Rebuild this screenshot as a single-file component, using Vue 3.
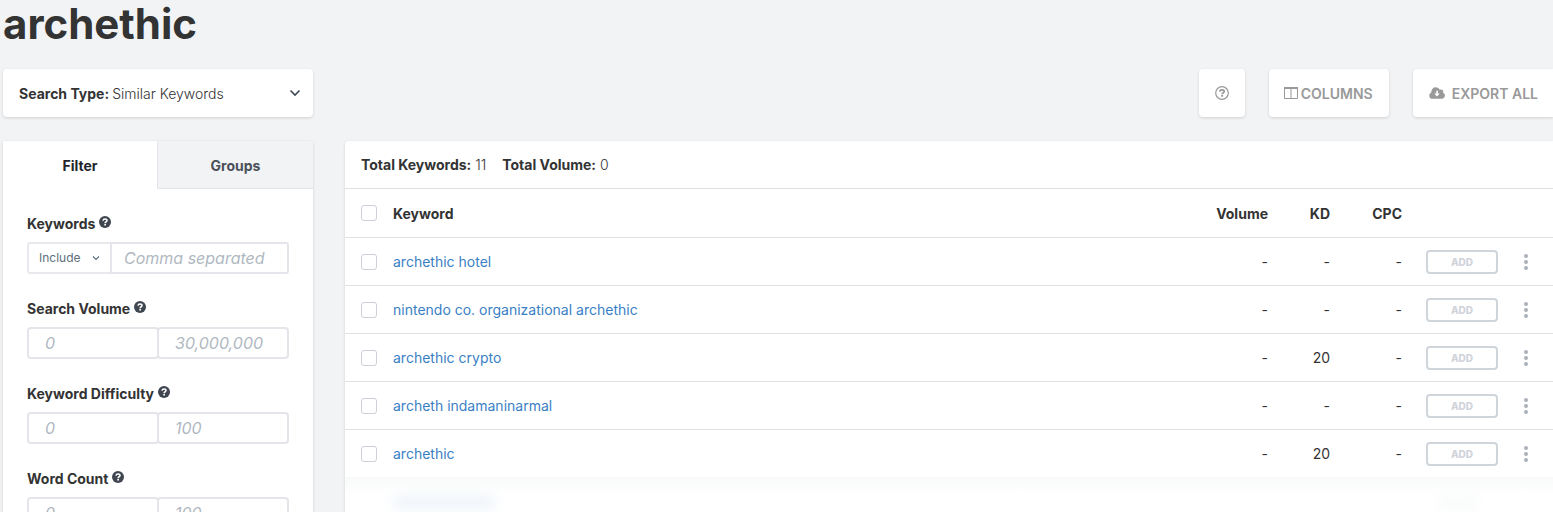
<script setup>
import { ref } from 'vue'

const tab = ref('filter')
const ranges = [
  { id: 'volume', label: 'Search Volume', min: '0', max: '30,000,000' },
  { id: 'difficulty', label: 'Keyword Difficulty', min: '0', max: '100' },
  { id: 'words', label: 'Word Count', min: '0', max: '100' },
]
const rows = [
  { keyword: 'archethic hotel', volume: '-', kd: '-', cpc: '-' },
  { keyword: 'nintendo co. organizational archethic', volume: '-', kd: '-', cpc: '-' },
  { keyword: 'archethic crypto', volume: '-', kd: '20', cpc: '-' },
  { keyword: 'archeth indamaninarmal', volume: '-', kd: '-', cpc: '-' },
  { keyword: 'archethic', volume: '-', kd: '20', cpc: '-' },
]
</script>

<template>
  <div class="page">
    <h1>archethic</h1>

    <div class="toolbar">
      <div class="search-type card">
        <label for="search-type">Search Type:</label>
        <select id="search-type">
          <option>Similar Keywords</option>
        </select>
        <svg class="chevron" viewBox="0 0 12 8" width="12" height="8"><path d="M1.5 1.5 6 6l4.500-4.500" /></svg>
      </div>
      <div class="actions">
        <button class="card action" type="button" aria-label="Help">
          <svg viewBox="0 0 14 14" width="14" height="14">
            <circle cx="7" cy="7" r="6.300" fill="none" stroke="currentColor" stroke-width="1.200" />
            <path d="M4.800 5.600C4.900 4.500 5.800 3.900 7 3.900s2.200.6 2.200 1.600C9.200 6.700 7.200 6.800 7.200 8.200" fill="none" stroke="currentColor" stroke-width="1.700" />
            <path d="M6.200 9h1.900v1.700H6.200z" fill="currentColor" />
          </svg>
        </button>
        <button class="card action columns" type="button">
          <svg viewBox="0 0 14 12" width="14" height="12">
            <path d="M.5 1v10.500h13V1M7 1.500v10" fill="none" stroke="currentColor" />
            <path d="M0 0h14v2H0z" fill="currentColor" />
          </svg>
          <span>COLUMNS</span>
        </button>
        <button class="card action export" type="button">
          <svg viewBox="0 0 16 12" width="16" height="12">
            <path fill="currentColor" fill-rule="evenodd" d="M3.600 11.800A3.400 3.400 0 0 1 .3 8.400c0-1.300.8-2.500 2-3v-.5A4.500 4.500 0 0 1 6.700.3c1.800 0 3.400 1.100 4.100 2.700.4-.3.800-.4 1.300-.4 1.200 0 2.200 1 2.200 2.200 0 .4-.1.700-.3 1 1.100.4 1.900 1.500 1.900 2.800 0 1.800-1.400 3.200-3.100 3.200zM7.300 3.800v2.700H5.200L8 9.600l2.800-3.100H8.900V3.800z" />
          </svg>
          <span>EXPORT ALL</span>
        </button>
      </div>
    </div>

    <div class="content">
      <aside class="sidebar">
        <div class="tabs" role="tablist">
          <button type="button" role="tab" :aria-selected="tab === 'filter'" :class="{ active: tab === 'filter' }" @click="tab = 'filter'">Filter</button>
          <button type="button" role="tab" :aria-selected="tab === 'groups'" :class="{ active: tab === 'groups' }" @click="tab = 'groups'">Groups</button>
        </div>
        <form class="filters" @submit.prevent>
          <div class="field">
            <div class="field-head">
              <label for="keywords">Keywords</label>
              <svg class="hint" viewBox="0 0 12 12" width="12" height="12">
                <circle cx="6" cy="6" r="6" />
                <path d="M4 4.700C4.100 3.700 4.900 3.100 6 3.100s2 .5 2 1.500C8 5.800 6.100 5.700 6.100 7.100" />
                <path class="dot" d="M5.300 7.800h1.700v1.600H5.300z" />
              </svg>
            </div>
            <div class="keyword-inputs">
              <div class="mode">
                <select aria-label="Keyword match mode">
                  <option>Include</option>
                </select>
                <svg class="chevron small" viewBox="0 0 8 6" width="8" height="6"><path d="M1 1.500 4 4.500l3-3" /></svg>
              </div>
              <input id="keywords" class="keywords" type="text" placeholder="Comma separated" />
            </div>
          </div>
          <div v-for="r in ranges" :key="r.id" class="field">
            <div class="field-head">
              <label :for="r.id">{{ r.label }}</label>
              <svg class="hint" viewBox="0 0 12 12" width="12" height="12">
                <circle cx="6" cy="6" r="6" />
                <path d="M4 4.700C4.100 3.700 4.900 3.100 6 3.100s2 .5 2 1.500C8 5.800 6.100 5.700 6.100 7.100" />
                <path class="dot" d="M5.300 7.800h1.700v1.600H5.300z" />
              </svg>
            </div>
            <div class="range">
              <input :id="r.id" type="text" :placeholder="r.min" />
              <input type="text" :aria-label="r.label + ' maximum'" :placeholder="r.max" />
            </div>
          </div>
        </form>
      </aside>

      <main class="results">
        <div class="summary">
          <span><b>Total Keywords:</b> 11</span>
          <span><b>Total Volume:</b> 0</span>
        </div>
        <table>
          <colgroup>
            <col class="c-check" />
            <col />
            <col class="c-volume" />
            <col class="c-kd" />
            <col class="c-cpc" />
            <col class="c-add" />
            <col class="c-menu" />
          </colgroup>
          <thead>
            <tr>
              <th class="check"><input type="checkbox" aria-label="Select all keywords" /></th>
              <th class="keyword">Keyword</th>
              <th>Volume</th>
              <th>KD</th>
              <th>CPC</th>
              <th></th>
              <th></th>
            </tr>
          </thead>
          <tbody>
            <tr v-for="row in rows" :key="row.keyword">
              <td class="check"><input type="checkbox" :aria-label="'Select ' + row.keyword" /></td>
              <td class="keyword"><a href="#">{{ row.keyword }}</a></td>
              <td>{{ row.volume }}</td>
              <td>{{ row.kd }}</td>
              <td>{{ row.cpc }}</td>
              <td class="add"><button class="add-button" type="button">ADD</button></td>
              <td class="menu">
                <button class="menu-button" type="button" :aria-label="'Options for ' + row.keyword">
                  <svg viewBox="0 0 4 16" width="4" height="16"><circle cx="2" cy="2" r="2" /><circle cx="2" cy="8" r="2" /><circle cx="2" cy="14" r="2" /></svg>
                </button>
              </td>
            </tr>
          </tbody>
        </table>
        <div class="locked" aria-hidden="true">
          <span class="haze link"></span>
          <span class="haze button"></span>
        </div>
      </main>
    </div>
  </div>
</template>

<style>
body {
  margin: 0;
  background: #f2f3f5;
}
</style>

<style scoped>
* {
  box-sizing: border-box;
}
.page {
  height: 100vh;
  overflow: hidden;
  padding-left: 3px;
  color: #333;
  font: 14px/20px Inter, "Liberation Sans", sans-serif;
}
button,
input,
select {
  margin: 0;
  font: inherit;
  color: inherit;
}
h1 {
  margin: 0;
  font-size: 42px;
  line-height: 48px;
  font-weight: 700;
}
.card {
  height: 48px;
  border: 0;
  border-radius: 4px;
  background: #fff;
  box-shadow: 0 1px 3px rgba(0, 0, 0, 0.14);
}
.toolbar {
  display: flex;
  justify-content: space-between;
  margin-top: 21px;
}
.search-type {
  position: relative;
  display: flex;
  align-items: center;
  gap: 3px;
  width: 310px;
  padding: 2px 16px 0;
}
label,
b {
  font-weight: 700;
}
.search-type select {
  flex: 1;
  font-weight: 300;
}
select {
  appearance: none;
  padding: 0;
  border: 0;
  background: transparent;
  outline: 0;
}
.chevron {
  position: absolute;
  right: 12px;
  top: 20px;
  fill: none;
  stroke: #3d4852;
  stroke-width: 1.6;
  pointer-events: none;
}
.chevron.small {
  right: 10px;
  top: 13px;
  stroke: #606f7b;
  stroke-width: 1.2;
}
.actions {
  display: flex;
  gap: 24px;
}
.action {
  display: flex;
  align-items: center;
  padding: 0 16px;
  color: #999;
  font-weight: 600;
}
.action span {
  padding-top: 2px;
}
.columns {
  gap: 3px;
  padding: 0 16px 0 15px;
}
.export {
  gap: 7px;
  padding-right: 15px;
  border-radius: 4px 0 0 4px;
}
.content {
  display: flex;
  gap: 32px;
  margin-top: 24px;
}
.sidebar {
  flex: none;
  width: 310px;
  background: #fff;
  box-shadow: 0 1px 3px rgba(0, 0, 0, 0.14);
}
.tabs {
  display: flex;
}
.tabs button {
  width: 50%;
  height: 48px;
  padding: 2px 0 0;
  border: 0;
  border-bottom: 1px solid #e2e4e9;
  background: #f2f3f5;
  color: #4a5058;
  font-weight: 700;
}
.tabs .active {
  border-right: 1px solid #e2e4e9;
  border-bottom-color: #fff;
  background: #fff;
  color: #22262b;
}
.filters {
  display: grid;
  grid-template-columns: minmax(0, 1fr);
  gap: 25px;
  padding: 25px 24px 24px;
}
.field-head {
  display: flex;
  gap: 4px;
  height: 28px;
}
.hint {
  margin-top: 2px;
  fill: #3f4650;
}
.hint path {
  fill: none;
  stroke: #fff;
  stroke-width: 1.5;
}
.hint .dot {
  fill: #fff;
  stroke: none;
}
.keyword-inputs,
.range {
  display: flex;
  height: 32px;
}
.mode {
  position: relative;
  flex: none;
  width: 83px;
  border: 2px solid #e8e9ed;
  border-right: 0;
  border-radius: 3px 0 0 3px;
}
.mode select {
  width: 100%;
  height: 100%;
  padding-left: 10px;
  color: #606f7b;
  font-size: 12px;
}
.mode .chevron {
  top: 11px;
}
.field input {
  flex: 1;
  min-width: 0;
  padding: 0 16px;
  border: 2px solid #e4e5eb;
  border-radius: 4px;
  background: #fff;
  outline: 0;
  font-size: 16px;
}
.field .keywords {
  padding: 0 12px;
  border-radius: 0 3px 3px 0;
}
.range input + input {
  margin-left: -2px;
}
input::placeholder {
  color: #b0b8c1;
  font-style: italic;
  opacity: 1;
}
.results {
  flex: 1;
  min-width: 0;
  background: #fff;
  border-radius: 4px 0 0 4px;
  box-shadow: 0 1px 3px rgba(0, 0, 0, 0.14);
}
.summary {
  display: flex;
  gap: 16px;
  height: 48px;
  padding: 14px 16px;
  border-bottom: 1px solid #dfe0e2;
  font-weight: 300;
}
table {
  width: 100%;
  table-layout: fixed;
  border-collapse: separate;
  border-spacing: 0;
}
.c-check {
  width: 48px;
}
.c-volume {
  width: 90px;
}
.c-kd {
  width: 62px;
}
.c-cpc {
  width: 72px;
}
.c-add {
  width: 96px;
}
.c-menu {
  width: 43px;
}
th,
td {
  height: 48px;
  padding: 0 12px 0 0;
  border-bottom: 1px solid #dfe0e2;
  text-align: right;
  vertical-align: middle;
}
th {
  height: 49px;
  padding-top: 2px;
  font-weight: 700;
}
tbody tr:last-child td {
  height: 47px;
  border-bottom: 0;
}
.keyword {
  padding-right: 0;
  text-align: left;
}
.check {
  padding: 0 0 0 16px;
  text-align: left;
}
.check input {
  appearance: none;
  display: block;
  width: 16px;
  height: 16px;
  border: 1px solid #cdd0d8;
  border-radius: 3px;
  background: #fff;
}
a {
  color: #3a7fc5;
  text-decoration: none;
}
.add,
.menu {
  padding: 0 0 0 12px;
}
.add-button {
  display: block;
  width: 72px;
  height: 24px;
  padding: 0;
  border: 2px solid #d0d5dc;
  border-radius: 4px;
  background: #fff;
  color: #d0d4da;
  font-size: 10px;
  line-height: 18px;
  font-weight: 800;
}
.menu-button {
  display: flex;
  justify-content: center;
  width: 8px;
  padding: 0;
  border: 0;
  background: none;
  fill: #aab1b9;
}
.locked {
  display: flex;
  justify-content: space-between;
  height: 48px;
  padding: 17px 76px 0 48px;
  overflow: hidden;
  background: linear-gradient(#f8f9f9, #fff 16px);
}
.haze {
  height: 16px;
  filter: blur(6px);
}
.link {
  width: 102px;
  background: #f1f6fb;
}
.button {
  width: 40px;
  background: #fafbfb;
}
</style>
